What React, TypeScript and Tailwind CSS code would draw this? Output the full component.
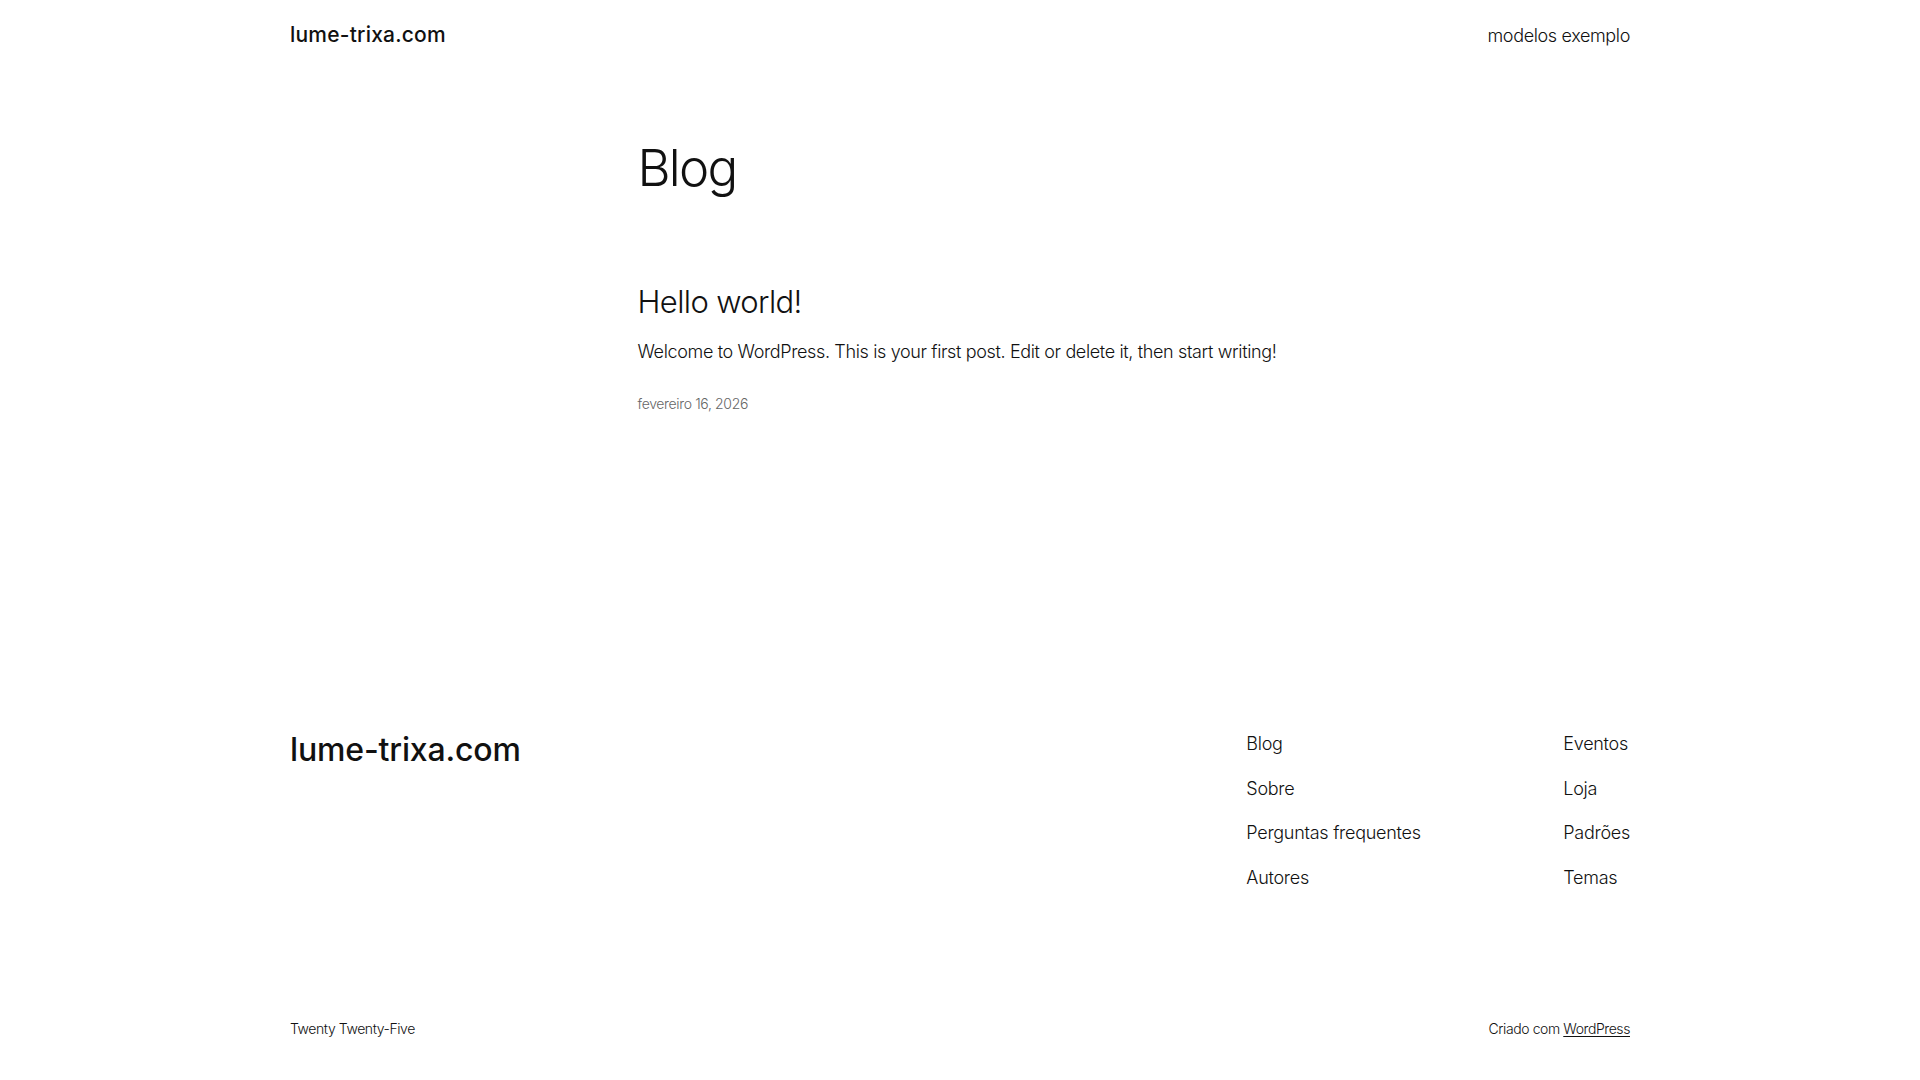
import React from 'react';

const footerLeft = ['Blog', 'Sobre', 'Perguntas frequentes', 'Autores'];
const footerRight = ['Eventos', 'Loja', 'Padrões', 'Temas'];

const App: React.FC = () => {
  return (
    <div
      className="min-h-screen bg-white text-[#111111]"
      style={{ fontFamily: 'Inter, "Noto Sans", sans-serif' }}
    >
      {/* Cabeçalho */}
      <header className="mx-auto flex h-[70px] max-w-[1340px] items-center justify-between">
        <a href="#" className="text-[21px] font-medium tracking-[0.01em]">
          lume-trixa.com
        </a>
        <nav>
          <a href="#" className="text-[18px] font-light tracking-[-0.02em]">
            modelos exemplo
          </a>
        </nav>
      </header>

      {/* Conteúdo */}
      <main className="mx-auto w-[645px] pt-[67px]">
        <h1 className="text-[51px] font-light leading-[62px] tracking-[-0.035em]">Blog</h1>

        <article className="mt-[85px]">
          <h2 className="text-[31px] font-light leading-[36px] tracking-[-0.02em]">
            <a href="#">Hello world!</a>
          </h2>
          <p className="mt-[18px] text-[18px] font-light leading-[27px] tracking-[-0.02em]">
            Welcome to WordPress. This is your first post. Edit or delete it, then start writing!
          </p>
          <time className="mt-[28px] block text-[14px] font-light leading-[21px] tracking-[-0.025em] text-[#666666]">
            fevereiro 16, 2026
          </time>
        </article>
      </main>

      {/* Rodapé */}
      <footer className="mx-auto mt-[316px] max-w-[1340px]">
        <div className="flex items-start justify-between">
          <a href="#" className="mt-[2px] text-[32px] font-medium leading-[36px] tracking-[-0.005em]">
            lume-trixa.com
          </a>
          <div className="flex">
            <ul className="flex w-[317px] flex-col gap-[17.5px]">
              {footerLeft.map(item => (
                <li key={item} className="text-[18px] font-light leading-[27px] tracking-[-0.015em]">
                  <a href="#">{item}</a>
                </li>
              ))}
            </ul>
            <ul className="flex flex-col gap-[17.5px]">
              {footerRight.map(item => (
                <li key={item} className="text-[18px] font-light leading-[27px] tracking-[-0.015em]">
                  <a href="#">{item}</a>
                </li>
              ))}
            </ul>
          </div>
        </div>

        <div className="mt-[127px] flex items-center justify-between pb-[41px] text-[14px] font-light leading-[21px] tracking-[-0.03em]">
          <p>Twenty Twenty-Five</p>
          <p>
            Criado com{' '}
            <a href="#" className="underline underline-offset-2">
              WordPress
            </a>
          </p>
        </div>
      </footer>
    </div>
  );
};

export default App;
